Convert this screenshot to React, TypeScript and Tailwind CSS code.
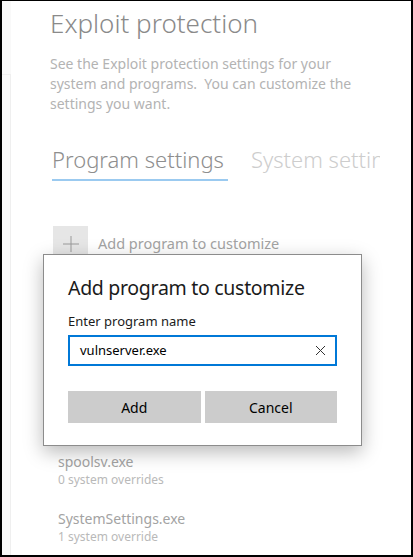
const font = { fontFamily: '"Segoe UI", "Noto Sans", "Open Sans", sans-serif' };

const ProgramItem = ({ name, overrides }: { name: string; overrides: string }) => (
  <div className="flex flex-col">
    <span className="text-[14px] leading-[19px] text-[#a3a3a3]">{name}</span>
    <span className="text-[12px] leading-[18px] text-[#b9b9b9]">{overrides}</span>
  </div>
);

const AddDialog = () => (
  <div className="absolute left-[41px] top-[253px] w-[319px] h-[192px] bg-white border border-[#8c8c8c] shadow-[0_6px_18px_rgba(0,0,0,0.28)] px-6 pt-[19px]">
    <h2 className="text-[19.5px] leading-[28px] tracking-[-0.3px] text-[#1b1b1b] whitespace-nowrap">Add program to customize</h2>
    <label className="block mt-[10px] text-[13px] leading-[18px] text-[#1b1b1b]">Enter program name</label>
    <div className="mt-[5px] flex items-center h-[31px] border-2 border-[#0078d7] pl-[10px] pr-[9px]">
      <span className="flex-1 text-[13px] text-[#000]">vulnserver.exe</span>
      <svg width="11" height="11" viewBox="0 0 11 11" className="text-[#333]">
        <path d="M1 1L10 10M10 1L1 10" stroke="currentColor" strokeWidth="1" />
      </svg>
    </div>
    <div className="mt-[25px] flex gap-[4px]">
      <button className="flex-1 h-[32px] bg-[#cccccc] text-[14px] text-[#000]">Add</button>
      <button className="flex-1 h-[32px] bg-[#cccccc] text-[14px] text-[#000]">Cancel</button>
    </div>
  </div>
);

export default function App() {
  return (
    <div
      className="relative w-[413px] h-[557px] overflow-hidden bg-white border-l-2 border-t border-r-2 border-b-2 border-black flex"
      style={font}
    >
      <div className="w-[9px] shrink-0 bg-[#f9f9f9] flex flex-col">
        <div className="h-[73px]" />
        <div className="flex-1 border-t border-r border-[#efefef]" />
      </div>

      <div className="pl-[39px] w-[369px] shrink-0 overflow-hidden">
        <h1 className="mt-[5px] text-[26px] leading-[34px] font-light text-[#8a8a8a] whitespace-nowrap">
          Exploit protection
        </h1>
        <p className="mt-[14px] text-[14px] leading-[20px] text-[#b3b3b3] whitespace-pre">
          {"See the Exploit protection settings for your\nsystem and programs.  You can customize the\nsettings you want."}
        </p>

        <div className="mt-[31px] flex gap-[23px] whitespace-nowrap">
          <div className="pl-[2px] flex flex-col">
            <span className="text-[22px] leading-[28px] font-light text-[#8e8e8e] pr-[4px]">Program settings</span>
            <div className="mt-[6px] h-[2px] bg-[#9bcaf0]" />
          </div>
          <span className="text-[22px] leading-[28px] font-light text-[#cdcdcd]">System settings</span>
        </div>

        <div className="mt-[45px] flex items-center gap-[10px] pl-[3px]">
          <div className="w-[35px] h-[35px] bg-[#e6e6e6] flex items-center justify-center">
            <svg width="16" height="16" viewBox="0 0 16 16">
              <path d="M8 0V16M0 8H16" stroke="#9a9a9a" strokeWidth="1" />
            </svg>
          </div>
          <span className="text-[14.5px] text-[#a3a3a3]">Add program to customize</span>
        </div>

        <div className="mt-[191px] pl-[8px] flex flex-col gap-[20px]">
          <ProgramItem name="spoolsv.exe" overrides="0 system overrides" />
          <ProgramItem name="SystemSettings.exe" overrides="1 system override" />
        </div>
      </div>

      <AddDialog />
    </div>
  );
}
